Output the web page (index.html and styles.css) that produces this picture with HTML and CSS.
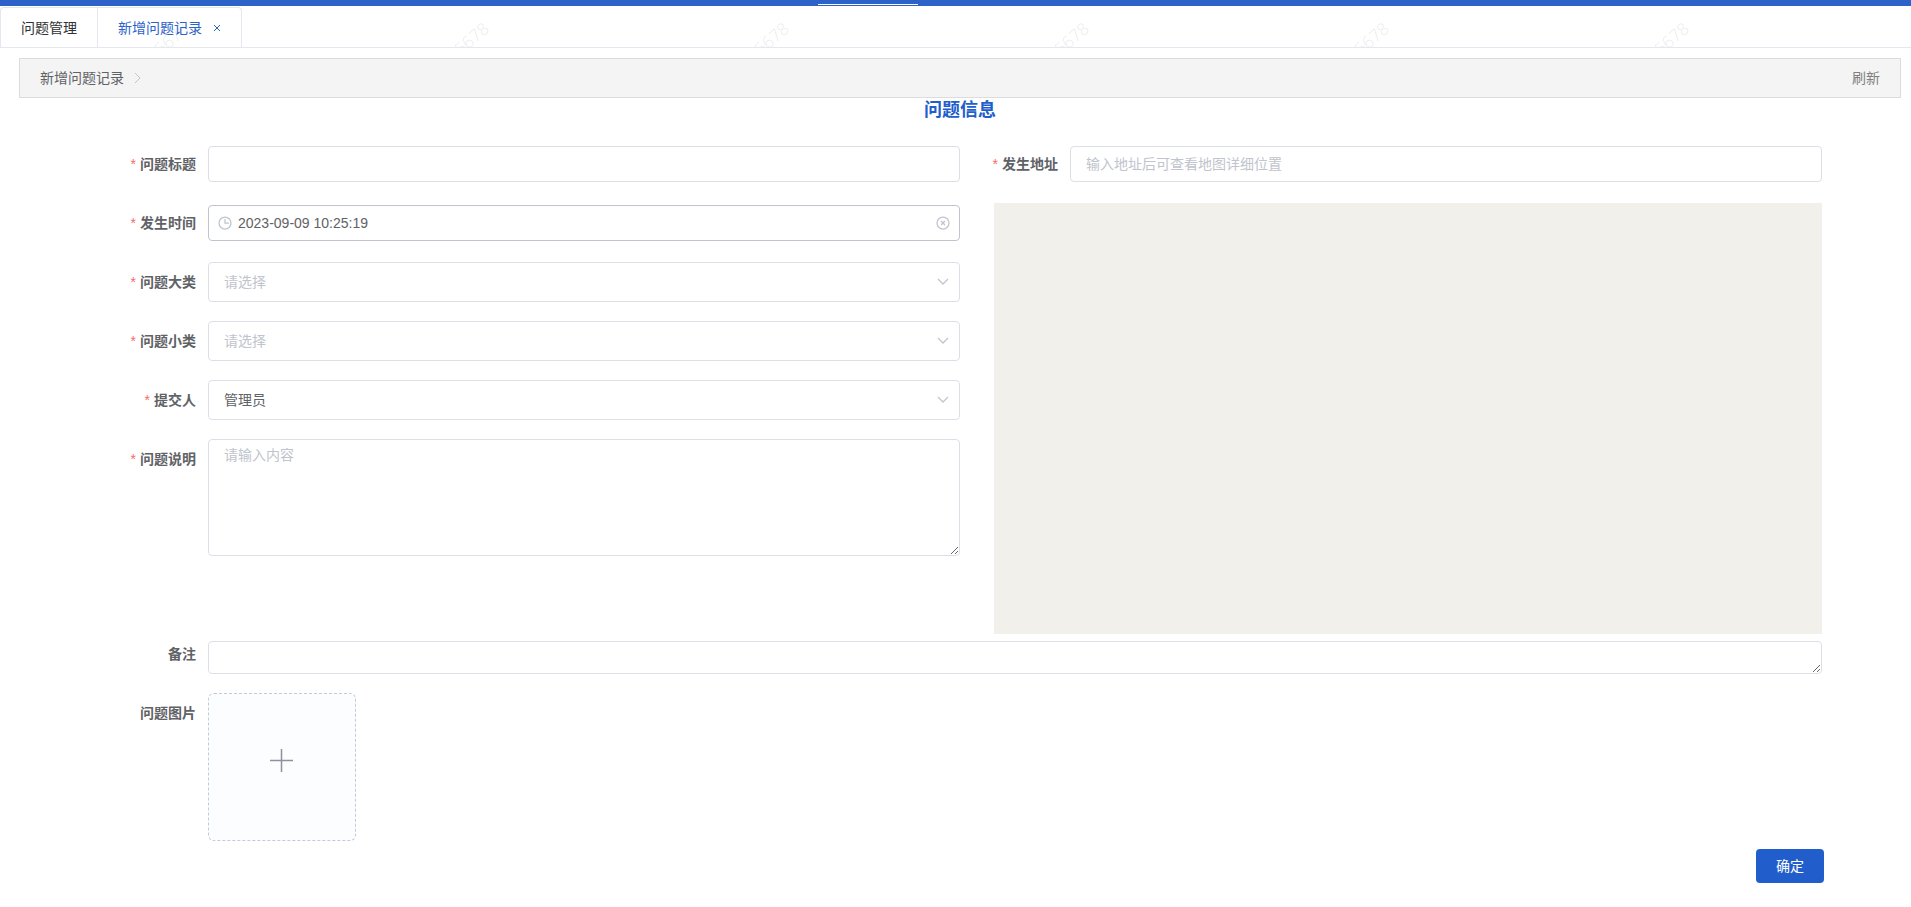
FILE: index.html
```html
<!DOCTYPE html>
<html lang="zh-CN">
<head>
<meta charset="utf-8">
<title>新增问题记录</title>
<link rel="stylesheet" href="styles.css">
</head>
<body>
<header class="topbar"><span class="topbar-active"></span></header>
<nav class="tabs">
  <svg class="watermark" aria-hidden="true">
    <defs>
      <pattern id="mark" x="150" width="300" height="60" patternUnits="userSpaceOnUse">
        <text class="watermark-text" transform="translate(11 50) rotate(-41)" x="0" y="0">5678</text>
      </pattern>
    </defs>
    <rect width="100%" height="100%" fill="url(#mark)"/>
  </svg>
  <div class="tab-group">
    <a class="tab" href="#list">问题管理</a>
    <div class="tab tab-current">
      <a class="tab-link" href="#new">新增问题记录</a>
      <button class="tab-close" type="button" aria-label="关闭">
        <svg width="8" height="8" viewBox="0 0 8 8"><path d="M1 1l6 6M7 1L1 7"/></svg>
      </button>
    </div>
  </div>
</nav>
<main class="page">
  <div class="crumbs">
    <span class="crumb">新增问题记录
      <svg class="crumb-arrow" width="8" height="12" viewBox="0 0 8 12"><path d="M1 1l5 5-5 5"/></svg>
    </span>
    <button class="refresh" type="button">刷新</button>
  </div>
  <h1 class="title">问题信息</h1>
  <form class="form">
    <div class="columns">
      <div class="column">
        <div class="row">
          <label class="label required" for="subject">问题标题</label>
          <div class="field"><input class="input" id="subject" type="text"></div>
        </div>
        <div class="row">
          <label class="label required" for="time">发生时间</label>
          <div class="field">
            <div class="date">
              <svg class="icon" width="14" height="14" viewBox="0 0 14 14"><circle cx="7" cy="7" r="6"/><path d="M7 3v4h4"/></svg>
              <input class="date-input" id="time" type="text" value="2023-09-09 10:25:19">
              <button class="clear" type="button" aria-label="清空">
                <svg class="icon" width="14" height="14" viewBox="0 0 14 14"><circle cx="7" cy="7" r="6"/><path d="M5 5l4 4M9 5L5 9"/></svg>
              </button>
            </div>
          </div>
        </div>
        <div class="row">
          <label class="label required" for="major">问题大类</label>
          <div class="field select-wrap">
            <select class="select select-empty" id="major"><option>请选择</option></select>
            <svg class="icon chevron" width="12" height="8" viewBox="0 0 12 8"><path d="M1 1l5 5 5-5"/></svg>
          </div>
        </div>
        <div class="row">
          <label class="label required" for="minor">问题小类</label>
          <div class="field select-wrap">
            <select class="select select-empty" id="minor"><option>请选择</option></select>
            <svg class="icon chevron" width="12" height="8" viewBox="0 0 12 8"><path d="M1 1l5 5 5-5"/></svg>
          </div>
        </div>
        <div class="row">
          <label class="label required" for="submitter">提交人</label>
          <div class="field select-wrap">
            <select class="select" id="submitter"><option>管理员</option></select>
            <svg class="icon chevron" width="12" height="8" viewBox="0 0 12 8"><path d="M1 1l5 5 5-5"/></svg>
          </div>
        </div>
        <div class="row">
          <label class="label required" for="detail">问题说明</label>
          <div class="field"><textarea class="textarea" id="detail" rows="5" placeholder="请输入内容"></textarea></div>
        </div>
      </div>
      <div class="column">
        <div class="row">
          <label class="label required" for="address">发生地址</label>
          <div class="field"><input class="input" id="address" type="text" placeholder="输入地址后可查看地图详细位置"></div>
        </div>
        <div class="map"></div>
      </div>
    </div>
    <div class="row">
      <label class="label" for="remark">备注</label>
      <div class="field field-end"><textarea class="textarea" id="remark" rows="1"></textarea></div>
    </div>
    <div class="row">
      <span class="label" id="picture-label">问题图片</span>
      <div class="field">
        <button class="upload" type="button" aria-labelledby="picture-label">
          <svg width="24" height="24" viewBox="0 0 24 24"><path stroke-width="1.500" d="M11.500 0v23M0 11.500h23"/></svg>
        </button>
      </div>
    </div>
    <div class="actions"><button class="submit" type="submit">确定</button></div>
  </form>
</main>
</body>
</html>
```
FILE: styles.css
```css
* {
  box-sizing: border-box;
}

body {
  margin: 0;
  color: #606266;
  background: #fff;
  font: 14px/20px "Liberation Sans", "Noto Sans CJK SC", sans-serif;
}

input,
select,
textarea,
button {
  margin: 0;
  color: inherit;
  font: inherit;
}

button {
  padding: 0;
  border: 0;
  background: none;
  cursor: pointer;
}

a {
  color: inherit;
  text-decoration: none;
}

svg {
  flex: none;
  fill: none;
  stroke: currentColor;
}

/* Top bar and tabs */
.topbar {
  display: flex;
  justify-content: center;
  align-items: flex-end;
  height: 6px;
  padding: 0 175px 1px 0;
  background: #2d62c8;
}

.topbar-active {
  width: 100px;
  height: 1px;
  background: #fff;
}

.tabs {
  position: relative;
  height: 42px;
  padding-top: 1px;
  border-bottom: 1px solid #e4e7ed;
}

.watermark {
  position: absolute;
  inset: 0;
  width: 100%;
  height: 100%;
  stroke: none;
}

.watermark-text {
  fill: #ececec;
  font: 300 17px "Open Sans", "Noto Sans", sans-serif;
}

.tab-group {
  position: relative;
  display: inline-flex;
  height: 41px;
  border: 1px solid #e4e7ed;
  border-bottom: 0;
  border-radius: 4px 4px 0 0;
}

.tab {
  display: flex;
  align-items: center;
  gap: 11px;
  padding: 0 20px;
  color: #303133;
}

.tab-current {
  border-left: 1px solid #e4e7ed;
  color: #2d62c8;
  box-shadow: 0 1px #fff;
}

.tab-close {
  display: flex;
}

/* Breadcrumb */
.page {
  padding: 10px 10px 0 19px;
}

.crumbs {
  display: flex;
  justify-content: space-between;
  align-items: center;
  height: 40px;
  padding: 0 20px;
  border: 1px solid #dcdcdc;
  background: #f4f4f4;
}

.crumb {
  display: flex;
  align-items: center;
  gap: 10px;
}

.crumb-arrow {
  color: #c0c4cc;
}

.refresh {
  color: #808080;
}

.title {
  margin: 0;
  color: #215ecc;
  font-size: 18px;
  font-weight: bold;
  line-height: 24px;
  text-align: center;
}

/* Form */
.form {
  padding: 22px 79px 0;
}

.columns {
  display: grid;
  grid-template-columns: 1fr 1fr;
}

.row {
  display: flex;
  margin-bottom: 19px;
}

.label {
  width: 110px;
  padding-right: 12px;
  font-weight: bold;
  line-height: 40px;
  text-align: right;
}

.required::before {
  content: "*";
  margin-right: 4px;
  color: #f56c6c;
  font-weight: normal;
}

.field {
  display: flex;
  flex: 1;
  align-items: center;
  min-height: 40px;
}

.field-end {
  align-items: flex-end;
}

.input,
.date,
.select,
.textarea {
  width: 100%;
  border: 1px solid #dcdfe6;
  border-radius: 4px;
  background: #fff;
  outline: 0;
}

.input {
  height: 36px;
  padding: 0 15px;
}

.input::placeholder,
.textarea::placeholder {
  color: #c0c4cc;
}

.date {
  display: flex;
  align-items: center;
  gap: 6px;
  height: 36px;
  padding: 0 9px;
  border-color: #c0c4cc;
}

.date-input {
  flex: 1;
  padding: 0;
  border: 0;
  outline: 0;
}

.icon {
  color: #c0c4cc;
  stroke-width: 1.25;
}

.clear {
  display: flex;
}

.select-wrap {
  position: relative;
}

.select {
  height: 40px;
  padding: 0 15px;
  appearance: none;
}

.select-empty {
  color: #c0c4cc;
}

.chevron {
  position: absolute;
  right: 11px;
  pointer-events: none;
}

.textarea {
  display: block;
  padding: 5px 15px;
  line-height: 21px;
  resize: vertical;
}

.map {
  height: 431px;
  margin-left: 34px;
  background: #f1f0eb;
}

.upload {
  display: flex;
  justify-content: center;
  align-items: center;
  width: 148px;
  height: 148px;
  padding-bottom: 12px;
  border: 1px dashed #c0ccda;
  border-radius: 6px;
  color: #8c939d;
  background: #fbfdff;
}

.actions {
  display: flex;
  justify-content: flex-end;
  margin: -11px -2px 0 0;
}

.submit {
  height: 34px;
  padding: 0 20px;
  border-radius: 4px;
  color: #fff;
  background: #215ecc;
}
```
